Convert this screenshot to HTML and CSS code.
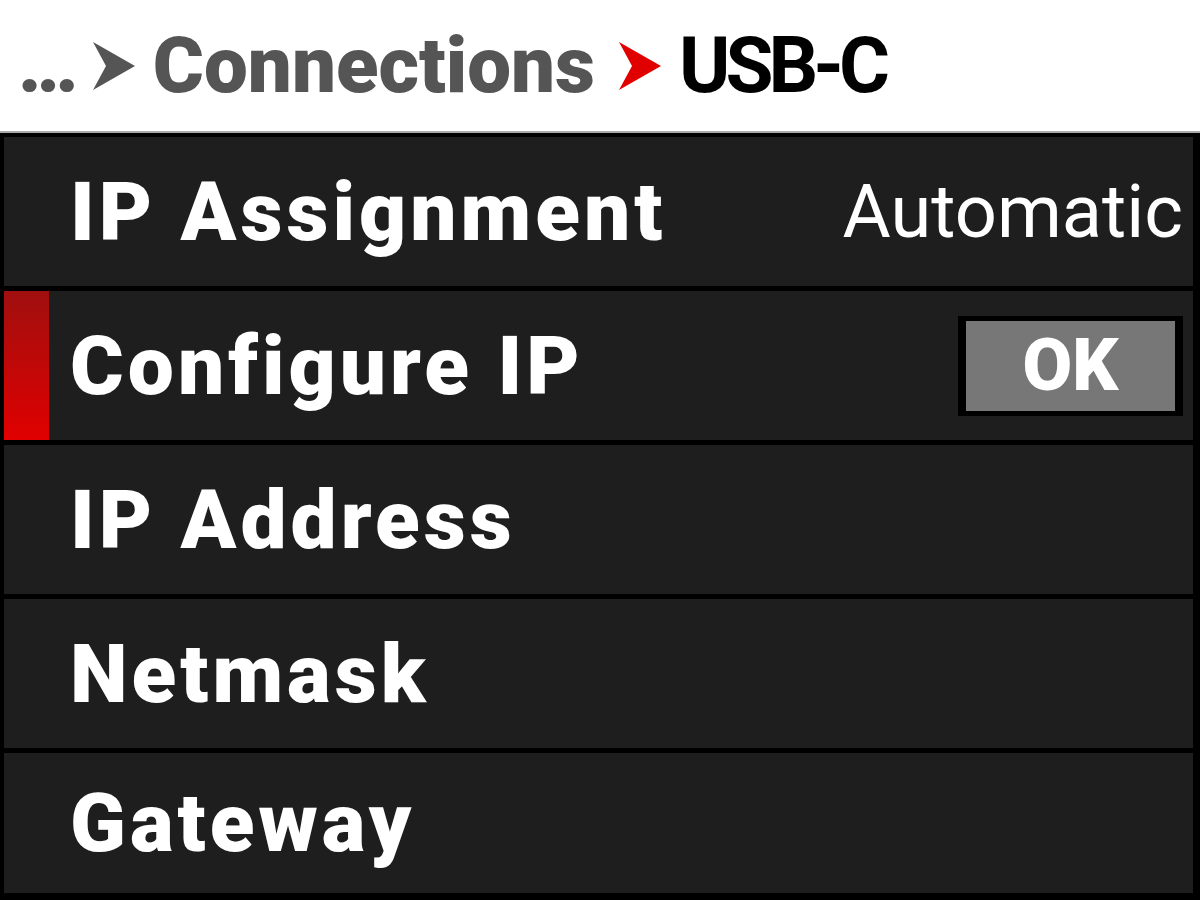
FILE: index.html
```html
<!DOCTYPE html>
<html lang="en">
<head>
<meta charset="UTF-8">
<meta name="viewport" content="width=device-width, initial-scale=1.0">
<title>USB-C</title>
<link rel="stylesheet" href="styles.css">
</head>
<body>
  <header class="crumbs">
    <span class="dots">...</span>
    <svg class="sep" viewBox="0 0 42 48" width="42" height="48"><polygon points="0,0 42,24 0,48 13,24" fill="#555"/></svg>
    <span class="parent">Connections</span>
    <svg class="sep" viewBox="0 0 42 48" width="42" height="48"><polygon points="0,0 42,24 0,48 13,24" fill="#e00000"/></svg>
    <span class="current">USB-C</span>
  </header>

  <div class="menu">
    <div class="row">
      <span class="label">IP Assignment</span>
      <span class="value">Automatic</span>
    </div>
    <div class="row selected">
      <span class="label">Configure IP</span>
      <span class="ok"><span>OK</span></span>
    </div>
    <div class="row">
      <span class="label">IP Address</span>
    </div>
    <div class="row">
      <span class="label">Netmask</span>
    </div>
    <div class="row last">
      <span class="label">Gateway</span>
    </div>
  </div>
</body>
</html>
```

FILE: styles.css
```css
body {
  margin: 0;
  background: #000;
  font-family: Roboto, "Liberation Sans", sans-serif;
  overflow: hidden;
}
.crumbs {
  height: 133px;
  background: #fff;
  border-bottom: 2px solid #aaa;
  box-sizing: border-box;
  display: flex;
  align-items: center;
  padding-left: 18px;
  font-weight: 900;
  font-size: 78px;
  line-height: 1;
}
.dots {
  color: #555;
  letter-spacing: -5px;
  margin-right: 19px;
}
.sep {
  margin-right: 18px;
}
.parent {
  color: #555;
  margin-right: 24px;
}
.current {
  color: #000;
  font-weight: 700;
  letter-spacing: -5px;
}
.menu {
  padding: 4px 7px 0 4px;
  display: flex;
  flex-direction: column;
  gap: 5px;
}
.row {
  height: 149px;
  background: #1e1e1e;
  display: flex;
  align-items: center;
  justify-content: space-between;
  padding: 0 10px 0 66px;
  box-sizing: border-box;
  color: #fff;
  position: relative;
}
.row.last {
  height: 140px;
}
.row.selected::before {
  content: "";
  position: absolute;
  left: 0;
  top: 0;
  bottom: 0;
  width: 45px;
  background: linear-gradient(#a00f0f, #e00000);
}
.label {
  font-weight: 900;
  font-size: 82px;
  letter-spacing: 4px;
}
.value {
  font-size: 74px;
}
.ok {
  background: #000;
  padding: 5px 8px;
  display: flex;
}
.ok span {
  width: 209px;
  height: 90px;
  background: #777;
  display: flex;
  align-items: center;
  justify-content: center;
  font-weight: 900;
  font-size: 72px;
}
```
